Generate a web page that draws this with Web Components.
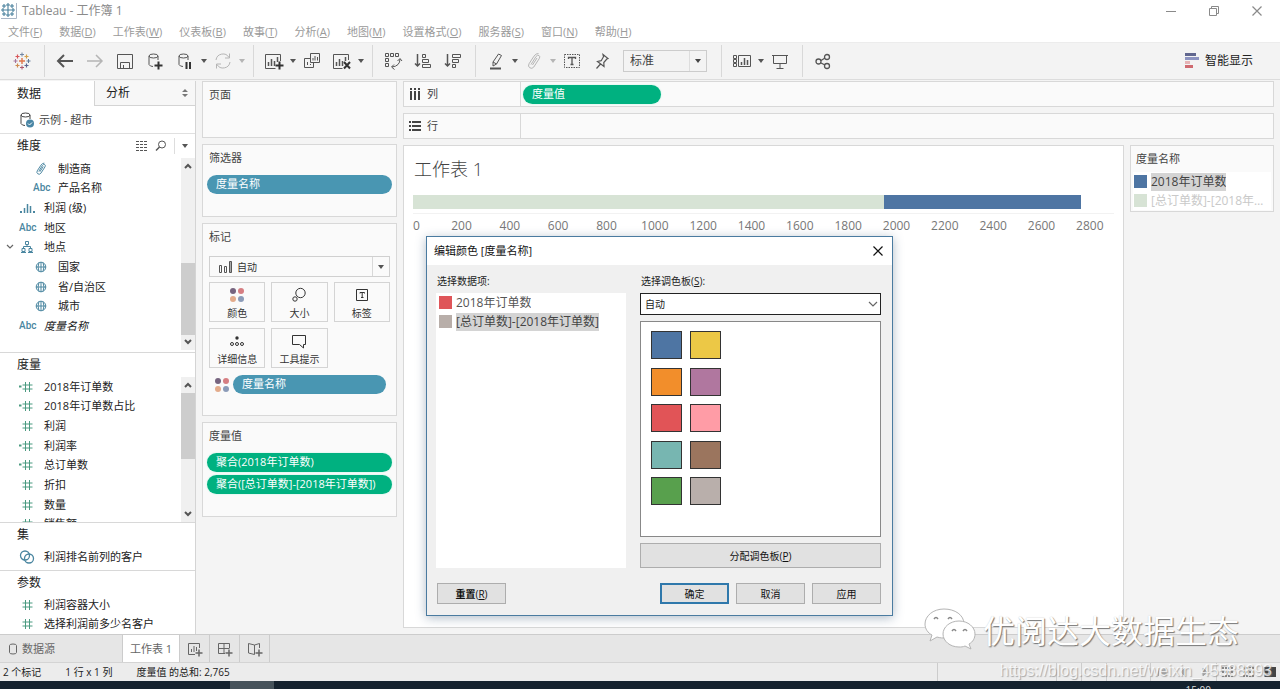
<!DOCTYPE html>
<html lang="zh-CN">
<head>
<meta charset="utf-8">
<title>Tableau - 工作簿 1</title>
<style>
html,body{margin:0;height:100%}
body{font:11px/16px "Open Sans","Noto Sans CJK SC",sans-serif;color:#333;background:#f4f4f4;overflow:hidden}
</style>
</head>
<body>
<workbook-app></workbook-app>
<script>
const grid4 = '<g stroke="none"><circle cx="4" cy="4" r="3" fill="#76647f"/><circle cx="12" cy="4" r="3" fill="#d67e82"/><circle cx="4" cy="12" r="3" fill="#e3ab8b"/><circle cx="12" cy="12" r="3" fill="#8b9bb8"/></g>';
const plus = (x, y, r = 3) => `<path stroke="#333" stroke-width="2" d="M${x - r} ${y}h${2 * r}M${x} ${y - r}v${2 * r}"/>`;
const cross = (x, y, r, c, w = 1) => `<path stroke="${c}" stroke-width="${w}" d="M${x - r} ${y}h${2 * r}M${x} ${y - r}v${2 * r}"/>`;
const tableau = cross(9, 9, 3, '#e0764a', 1.4) + cross(9, 2.5, 2, '#7187a5') + cross(9, 15.5, 2, '#b0566c') + cross(2.5, 9, 2, '#a5749b') + cross(15.5, 9, 2, '#5f7796') + cross(4.5, 4.5, 2, '#d8575a', 1.2) + cross(13.5, 4.5, 2, '#d3a04b', 1.2) + cross(4.5, 13.5, 2, '#cf8b4e', 1.2) + cross(13.5, 13.5, 2, '#5b6591', 1.2);
const tableauBlue = ['7 7 3', '7 2 2', '7 12 2', '2 7 2', '12 7 2', '3 3 2', '11 3 2', '3 11 2', '11 11 2'].map(s => cross(...s.split(' ').map(Number), '#467f9b', 1.1)).join('');
const clip = '<path d="M5 12.500 10 4.500q1.500-2 3-1t.3 3l-5.500 8.500q-1.800 2.300-4 .8t-.8-4l5-7.700q2-2.800 4.500-2.600M6.500 13l4.500-7"/>';
const hash = '<path d="M6.500 3v10M10.500 3v10M3.500 6h10M3.500 10h10"/>';
const cyl = '<path d="M2 4v8.500q1 2 4 2M11 8V4M2 4q0-2 4.500-2T11 4 6.500 6 2 4"/>';
/* name: [width, height, markup]; strokes take currentColor unless overridden */
const ICONS = {
  tableau: [18, 18, tableau],
  appicon: [16, 16, '<g>' + tableauBlue + '</g><path stroke="#a9b6c6" d="M15.500 0v15.500H0"/>'],
  back: [18, 18, '<path stroke-width="2" d="M17 9H2M8 3 2 9l6 6"/>'],
  fwd: [18, 18, '<path stroke-width="1.500" d="M1 9h15M10 3l6 6-6 6"/>'],
  save: [18, 18, '<path d="M1.500 2.500h15v14h-15zM4.500 16.500v-6h9v6M7.500 16v-3"/>'],
  dsadd: [16, 18, cyl + plus(11.5, 13.5, 4)],
  dspause: [16, 18, cyl + '<path stroke="#333" stroke-width="2" d="M9.500 10v7M13 10v7"/>'],
  refresh: [18, 18, '<path d="M2 8a7 7 0 0 1 13-2.500M16 10a7 7 0 0 1-13 2.500M15.500 1.500v4.500H11M2.500 16.500V12H7"/>'],
  newws: [20, 18, '<path d="M16.500 9V2.500h-15v14h10"/><path stroke-width="1.500" d="M4.500 10v4M7.500 7v7M10.500 9v5M13.500 5v5"/>' + plus(15.5, 13.5, 4)],
  dup: [18, 18, '<path d="M7.500 1.500h9v9h-9zM7 6.500H1.500v9h9V11M4.500 10v3M7.500 12v1"/><path d="M10 6v2.500M12 4v4.500M14.500 5v3.500"/>'],
  clear: [20, 18, '<path d="M16.500 8V2.500h-15v14h9"/><path stroke-width="1.500" d="M4.500 10v4M7.500 7v7M10.500 9v5M13.500 5v4"/><path stroke="#333" stroke-width="2" d="m12 10 6 6.500m0-6.500-6 6.500"/>'],
  swap: [20, 18, '<path d="M2.500 1.500h3v3h-3zM7.500 1.500h3v3h-3zM12.500 1.500h3v3h-3zM2.500 6.500h3v3h-3zM2.500 11.500h3v3h-3zM17 7q0 7-8 8M14.500 9 17 6.500 19 9M11 12.500 8.500 15l3 2.500"/>'],
  asc: [18, 18, '<path stroke-width="1.500" d="M3.500 2v12M1 11.500 3.500 14 6 11.500"/><path d="M8.500 2.500h3v3h-3zM8.500 7.500h6v3h-6zM8.500 12.500h8v3h-8z"/>'],
  desc: [18, 18, '<path stroke-width="1.500" d="M3.500 2v12M1 11.500 3.500 14 6 11.500"/><path d="M8.500 2.500h8v3h-8zM8.500 7.500h6v3h-6zM8.500 12.500h3v3h-3z"/>'],
  hilite: [16, 18, '<path d="m5 10 5.500-8 3 1.500-5 8.500L5 14zM5 10l3.500 2"/><path stroke-width="2" d="M2 16.500h11"/>'],
  clip: [16, 18, clip],
  label: [18, 18, '<path stroke-dasharray="1.500 1" d="M1.500 2.500h15v13h-15z"/><path stroke-width="1.300" d="M5.500 7V5.500h7V7M9 5.500v7M7.500 12.500h3"/>'],
  pin: [16, 18, '<path stroke-width="1.200" d="m9 2.500 5 4-1.200.5-3 3.500.2 4-6.500-5 3.700-.8 2.300-4zM6.500 12 2.500 16.500"/>'],
  fit: [20, 18, '<path d="M1.500 3.500h3v3h-3zM1.500 7.500h3v3h-3zM1.500 11.500h3v3h-3zM6.500 3.500h12v11h-12z"/><path stroke-width="1.500" d="M9.500 10v3M12.500 6v7M15.500 8v5"/>'],
  present: [18, 18, '<path d="M1 3.500h16M2.500 3.500v8h13v-8M9 12v4M5.500 16.500h7"/>'],
  share: [18, 18, '<g stroke-width="1.300"><circle cx="4.500" cy="9.500" r="2.500"/><circle cx="13" cy="5" r="2.500"/><circle cx="13" cy="14" r="2.500"/><path d="m7 8.500 4-2.500M7 11l4 2"/></g>'],
  showme: [14, 16, '<g stroke="none"><path fill="#61678f" d="M0 0h11v3H0z"/><path fill="#8c93c0" d="M0 4h14v3H0z"/><path fill="#e6b3b5" d="M0 8h5v3H0z"/><path fill="#cf6a70" d="M0 12h8v3H0z"/></g>'],
  caret: [6, 4, '<path fill="currentColor" stroke="none" d="M0 0h6L3 4z"/>'],
  updown: [6, 8, '<path fill="currentColor" stroke="none" d="M0 3h6L3 0zM0 5h6L3 8z"/>'],
  up: [8, 6, '<path stroke-width="2" d="M1 5l3-3 3 3"/>'],
  down: [8, 6, '<path stroke-width="2" d="M1 1l3 3 3-3"/>'],
  chev: [10, 6, '<path stroke-width="1.200" d="M1 1l4 4 4-4"/>'],
  twisty: [8, 6, '<path stroke-width="1.200" d="M1 1l3 3 3-3"/>'],
  source: [16, 18, cyl + '<circle cx="11" cy="12.500" r="4" fill="#4a86a5" stroke="none"/><path stroke="#fff" d="m9 12.500 1.500 1.500L13 11.500"/>'],
  list: [12, 12, '<path stroke-dasharray="3 1" d="M0 1.500h12M0 4.500h12M0 7.500h12M0 10.500h12"/>'],
  search: [12, 12, '<circle cx="7" cy="4.500" r="3.500"/><path stroke-width="1.500" d="M4.500 7 1 10.500"/>'],
  fieldclip: [16, 16, `<g transform="translate(2 1) scale(.75)" stroke-width="1.300">${clip}</g>`],
  bars: [16, 16, '<path stroke-width="1.500" d="M5.500 8v5M8.500 4v9M11.500 6v7"/><path stroke-width="2" d="M1 12h2M14 12h2"/>'],
  tree: [16, 16, '<path d="M6.500 2.500h3v3h-3zM3 12.500h3v-3H3zM10 12.500h3v-3h-3zM8 5.500v2M4.500 9.500v-2h7v2M2 13.500h5M9 13.500h5"/>'],
  globe: [16, 16, '<circle cx="8" cy="8" r="4.800"/><path d="M3 8h10M8 3v10M6 3.700q-2 4.300 0 8.600M10 3.700q2 4.300 0 8.600"/>'],
  hash: [16, 16, hash],
  calc: [16, 16, hash + '<path stroke-width="2" d="M0 7.500h2.500"/>'],
  sets: [16, 16, '<g stroke-width="1.300"><circle cx="6" cy="6.500" r="4.500"/><circle cx="10" cy="9.500" r="4.500"/></g>'],
  cols: [12, 14, '<path stroke-width="2" d="M2 4v9M6 4v9M10 4v9M2 1v2M6 1v2M10 1v2"/>'],
  rows: [12, 12, '<path stroke-width="2" d="M3 2h9M3 6h9M3 10h9M0 2h2M0 6h2M0 10h2"/>'],
  marktype: [16, 14, '<path d="M2.500 5.500h2v7h-2zM7.500 6.500h2v6h-2z"/><path fill="#aaa" d="M12.500 1.500h2v11h-2z"/>'],
  color: [16, 16, grid4],
  size: [16, 16, '<circle cx="9.500" cy="6" r="4.700"/><circle cx="4" cy="12" r="2.200" fill="#fafafa"/>'],
  text: [16, 16, '<path d="M2.500 2.500h11v11h-11zM6 6.500v-1h4.500v1M8.200 5.500v5M7 10.500h2.500"/>'],
  detail: [16, 16, '<circle cx="8" cy="5" r="1.700" fill="currentColor" stroke="none"/><circle cx="3" cy="11" r="1.500"/><circle cx="8" cy="11" r="1.500"/><circle cx="13" cy="11" r="1.500"/>'],
  tip: [16, 16, '<path d="M1.500 2.500h13v9h-2v3.500L8.500 11.500h-7z"/>'],
  cyl: [10, 12, '<path d="M1.500 2.500v7q0 1.500 3.500 1.500t3.500-1.500v-7q0-1.500-3.500-1.500T1.500 2.500"/>'],
  tabws: [16, 16, '<path d="M12.500 7V2.500h-11v11H8M4.500 8v3M7 5v6M9.500 6v4"/><path stroke-width="1.500" d="M8.500 12h7M12 8.500v7"/>'],
  tabdash: [16, 16, '<path d="M12.500 7V2.500h-11v10H8M1.500 7.500h11M7 2.500v10"/><path stroke-width="1.500" d="M8.500 12h7M12 8.500v7"/>'],
  tabstory: [16, 16, '<path d="M7.500 4v9.500L1.500 12V2.500l6 1.500 5-1.500V7"/><path stroke-width="1.500" d="M8.500 12h7M12 8.500v7"/>'],
  min: [12, 12, '<path d="M1 6.500h10"/>'],
  max: [12, 12, '<path d="M1.500 3.500h7v7h-7zM3.500 3V1.500h7v7H9"/>'],
  close: [12, 12, '<path stroke-width="1.200" d="m1.500 1.500 9 9m0-9-9 9"/>'],
  first: [10, 10, '<path d="M1.500 1v8"/><path fill="currentColor" d="M9 1v8L4 5z"/>'],
  prev: [10, 10, '<path fill="currentColor" d="M7 1v8L3 5z"/>'],
  next: [10, 10, '<path fill="currentColor" d="M3 1v8l4-4z"/>'],
  tiles: [12, 10, '<path stroke-dasharray="2 1" stroke-width="2" d="M0 1h12M0 5h12M0 9h12"/>'],
  block: [12, 10, '<path fill="currentColor" d="M1 0h11v10H1z"/><path stroke="#eee" d="M1 3h4v4H1"/>'],
  wechat: [52, 42, '<g fill="#fff" stroke="#b4b4b4" stroke-width="1"><path d="M20 1C9 1 1 8 1 16c0 5 3 9 7 11l-2 6 7-4c3 1 6 1 9 1 9 0 18-5 18-14S31 1 20 1z"/><path d="M35 13c-9 0-16 6-16 13s7 13 16 13c2 0 4 0 6-1l6 3-2-5c4-2 6-6 6-10 0-7-7-13-16-13z"/></g><path stroke="#888" stroke-width="1.500" d="M10 11q2-3 4 0M24 11q2-3 4 0M28 23q2-3 4 0M39 23q2-3 4 0"/>']
};

function define(name, html) {
  const t = document.createElement('template');
  t.innerHTML = html;
  customElements.define(name, class extends HTMLElement {
    constructor() {
      super();
      this.attachShadow({ mode: 'open' }).append(t.content.cloneNode(true));
    }
  });
}

customElements.define('ui-icon', class extends HTMLElement {
  connectedCallback() {
    if (this.shadowRoot) return;
    const [w, h, body] = ICONS[this.getAttribute('name')];
    this.attachShadow({ mode: 'open' }).innerHTML =
      `<style>:host{display:inline-block;flex:none;line-height:0}svg{display:block}</style>
       <svg width="${w}" height="${h}" viewBox="0 0 ${w} ${h}" fill="none" stroke="currentColor" aria-hidden="true">${body}</svg>`;
  }
});

/* toolbar button: icon, optional drop-down caret */
customElements.define('tool-button', class extends HTMLElement {
  connectedCallback() {
    if (this.shadowRoot) return;
    this.attachShadow({ mode: 'open' }).innerHTML =
      `<style>:host{display:flex;align-items:center;color:#555}:host([dim]){color:#b5b5b5}
       button{all:unset;display:flex;align-items:center;justify-content:center;width:30px;height:30px}
       button.c{width:8px}</style>
       <button aria-label="${this.getAttribute('label')}"><ui-icon name="${this.getAttribute('icon')}"></ui-icon></button>
       ${this.hasAttribute('menu') ? '<button class="c" aria-label="更多"><ui-icon name="caret"></ui-icon></button>' : ''}`;
  }
});

define('window-bar', `<style>
:host{display:flex;align-items:center;height:22px;background:#fff;color:#8a8a8a;padding:0 17px 0 1px;gap:5px}
h1{font:inherit;font-size:12px;margin:0;flex:1}
button{all:unset;width:38px;height:20px;display:flex;align-items:center;justify-content:flex-end}
</style>
<ui-icon name="appicon"></ui-icon><h1>Tableau - 工作簿 1</h1>
<button aria-label="最小化"><ui-icon name="min"></ui-icon></button><button aria-label="还原"><ui-icon name="max"></ui-icon></button><button aria-label="关闭"><ui-icon name="close"></ui-icon></button>`);

define('menu-bar', `<style>
:host{display:block;background:#fff;color:#9a9a9a}
nav{display:flex;align-items:center;height:20px;gap:17px;padding-left:8px}
button{all:unset;white-space:nowrap}
</style><nav>
<button>文件(<u>F</u>)</button><button>数据(<u>D</u>)</button><button>工作表(<u>W</u>)</button><button>仪表板(<u>B</u>)</button><button>故事(<u>T</u>)</button><button>分析(<u>A</u>)</button><button>地图(<u>M</u>)</button><button>设置格式(<u>O</u>)</button><button>服务器(<u>S</u>)</button><button>窗口(<u>N</u>)</button><button>帮助(<u>H</u>)</button></nav>`);

define('tool-bar', `<style>
:host{display:flex;align-items:center;height:38px;background:#f3f3f3;border-bottom:1px solid #dcdcdc;border-top:1px solid #ececec;box-sizing:border-box}
.g{display:flex;align-items:center;height:32px;border-right:1px solid #d8d8d8;padding:0 7px 0 5px}
.g.logo{padding:0 7px}.g.last{border:0}
.fit{display:flex;position:relative;align-items:center;margin:0 7px 0 6px;width:84px;height:22px;box-sizing:border-box;border:1px solid #ccc;color:#444}
select{appearance:none;border:0;background:none;font:inherit;font-size:12px;color:inherit;width:100%;height:20px;padding:0 6px;outline:0}
.fit ui-icon{position:absolute;right:5px;pointer-events:none}
.fit::after{content:"";position:absolute;right:16px;width:1px;height:20px;background:#ddd}
.show{all:unset;display:flex;align-items:center;gap:6px;margin-left:auto;padding-right:27px;font-size:12px;color:#222}
</style>
<div class="g logo"><tool-button icon="tableau" label="起始页"></tool-button></div>
<div class="g"><tool-button icon="back" label="撤消"></tool-button><tool-button dim icon="fwd" label="重做"></tool-button><tool-button icon="save" label="保存"></tool-button><tool-button icon="dsadd" label="新建数据源"></tool-button><tool-button menu icon="dspause" label="暂停自动更新"></tool-button><tool-button dim menu icon="refresh" label="运行更新"></tool-button></div>
<div class="g"><tool-button menu icon="newws" label="新建工作表"></tool-button><tool-button icon="dup" label="复制"></tool-button><tool-button menu icon="clear" label="清除工作表"></tool-button></div>
<div class="g"><tool-button icon="swap" label="交换行和列"></tool-button><tool-button icon="asc" label="升序排序"></tool-button><tool-button icon="desc" label="降序排序"></tool-button></div>
<div class="g"><tool-button menu icon="hilite" label="突出显示"></tool-button><tool-button dim menu icon="clip" label="组成员"></tool-button><tool-button icon="label" label="显示标记标签"></tool-button><tool-button icon="pin" label="固定轴"></tool-button>
<div class="fit"><select aria-label="适合"><option>标准</option></select><ui-icon name="caret"></ui-icon></div></div>
<div class="g"><tool-button menu icon="fit" label="显示/隐藏卡"></tool-button><tool-button icon="present" label="演示模式"></tool-button></div>
<div class="g last"><tool-button icon="share" label="共享"></tool-button></div>
<button class="show"><ui-icon name="showme"></ui-icon>智能显示</button>`);

define('scroll-rail', `<style>
:host{display:flex;flex-direction:column;width:14px;background:#f0f0f0;color:#555}
button{all:unset;height:16px;display:flex;align-items:center;justify-content:center}
.rail{flex:1;display:flex;flex-direction:column}
.thumb{background:#cdcdcd;height:var(--thumb);margin-top:var(--start,0)}
</style><button aria-label="向上滚动"><ui-icon name="up"></ui-icon></button><div class="rail"><div class="thumb"></div></div><button aria-label="向下滚动"><ui-icon name="down"></ui-icon></button>`);

customElements.define('field-row', class extends HTMLElement {
  connectedCallback() {
    if (this.shadowRoot) return;
    const i = this.getAttribute('icon');
    this.attachShadow({ mode: 'open' }).innerHTML =
      `<style>:host{display:flex;align-items:center;min-height:0;color:#222;white-space:nowrap}
       .t{width:19px;display:flex;justify-content:center;color:#666}
       .i{width:16px;margin-right:9px;display:flex;color:#4a9a80}
       .i.d{color:#4a86a0}.i b{font:500 10px/16px Roboto,sans-serif;color:#4a86a0}
       :host([indent]) .t{width:33px}</style>
       <span class="t">${this.hasAttribute('open') ? '<ui-icon name="twisty"></ui-icon>' : ''}</span>
       <span class="i ${/hash|calc/.test(i) ? '' : 'd'}">${i === 'abc' ? '<b>Abc</b>' : `<ui-icon name="${i}"></ui-icon>`}</span><slot></slot>`;
  }
});

define('data-pane', `<style>
:host{display:flex;flex-direction:column;box-sizing:border-box;width:196px;flex:none;background:#fff;border-right:1px solid #d4d4d4;min-height:0;overflow:hidden}
.tabs{display:flex;height:25px;flex:none}
.tabs button{all:unset;box-sizing:border-box;padding-left:17px;font-size:12px;line-height:26px;color:#222;width:94px}
.tabs button+button{flex:1;display:flex;align-items:center;justify-content:space-between;padding:0 7px 0 11px;background:#f7f7f7;border-left:1px solid #d4d4d4;border-bottom:1px solid #d4d4d4}
.tabs ui-icon{color:#777}
.src{display:flex;align-items:center;gap:4px;padding-left:19px;height:27px;flex:none;border-bottom:1px solid #e0e0e0;color:#444}
section{border-bottom:1px solid #d8d8d8;display:flex;flex-direction:column;min-height:0;flex:none;overflow:hidden;box-sizing:border-box}
h2{font:12px/24px "Open Sans","Noto Sans CJK SC",sans-serif;color:#222;margin:0;padding-left:17px;display:flex;align-items:center;flex:none}
h2 .a{margin-left:auto;display:flex;align-items:center;gap:7px;color:#555;padding-right:7px}
.a i{width:1px;height:16px;background:#ddd}
.body{display:flex;flex:1;min-height:0}
.list{flex:1;display:grid;grid-auto-rows:1fr}
.dims{height:219px}.dims .list{height:177px;padding-top:1px}.dims .body{flex:none;height:192px}
.meas{height:170px}.meas .list{height:157px}
.sets{height:48px}.sets .list{flex:none;height:19px}.two{height:39px;flex:none}
.pars{flex:1;border:0}
</style>
<div class="tabs"><button>数据</button><button>分析<ui-icon name="updown"></ui-icon></button></div>
<div class="src"><ui-icon name="source"></ui-icon>示例 - 超市</div>
<section class="dims"><h2>维度<span class="a"><ui-icon name="list"></ui-icon><ui-icon name="search"></ui-icon><i></i><ui-icon name="caret"></ui-icon></span></h2>
<div class="body"><div class="list">
<field-row indent icon="fieldclip">制造商</field-row><field-row indent icon="abc">产品名称</field-row><field-row icon="bars">利润 (级)</field-row><field-row icon="abc">地区</field-row><field-row open icon="tree">地点</field-row><field-row indent icon="globe">国家</field-row><field-row indent icon="globe">省/自治区</field-row><field-row indent icon="globe">城市</field-row><field-row icon="abc"><em>度量名称</em></field-row>
</div><scroll-rail style="--thumb:72px;--start:89px"></scroll-rail></div></section>
<section class="meas"><h2>度量</h2><div class="body"><div class="list">
<field-row icon="calc">2018年订单数</field-row><field-row icon="calc">2018年订单数占比</field-row><field-row icon="hash">利润</field-row><field-row icon="calc">利润率</field-row><field-row icon="calc">总订单数</field-row><field-row icon="hash">折扣</field-row><field-row icon="hash">数量</field-row><field-row icon="hash">销售额</field-row>
</div><scroll-rail style="--thumb:66px"></scroll-rail></div></section>
<section class="sets"><h2>集</h2><div class="list"><field-row icon="sets">利润排名前列的客户</field-row></div></section>
<section class="pars"><h2>参数</h2><div class="list two"><field-row icon="hash">利润容器大小</field-row><field-row icon="hash">选择利润前多少名客户</field-row></div></section>`);

define('field-pill', `<style>
:host{display:block;box-sizing:border-box;height:19px;line-height:18px;border-radius:10px;padding:0 9px;color:#fff;background:#4996b2;white-space:nowrap}
:host([measure]){background:#00b180;box-shadow:0 0 2px #b8f3e0}
</style><slot></slot>`);

define('shelf-card', `<style>
:host{display:block;box-sizing:border-box;border:1px solid #d8d8d8;background:#fafafa;padding:4px}
h3{font:inherit;line-height:18px;margin:0 0 0 2px;color:#444}
</style><h3><slot name="title"></slot></h3><slot></slot>`);

define('mark-button', `<style>
:host{display:block}
button{all:unset;box-sizing:border-box;width:100%;height:40px;border:1px solid #d4d4d4;background:#fafafa;display:flex;flex-direction:column;align-items:center;justify-content:space-between;padding:4px 0 0;font-size:10px;line-height:16px;color:#333;white-space:nowrap}
</style><button><slot name="icon"></slot><slot></slot></button>`);

define('card-column', `<style>
:host{display:flex;flex-direction:column;gap:6px;width:195px;flex:none}
.pages{height:57px}.filters{height:73px}.marks{height:193px}.values{height:95px}
.filters field-pill{margin-top:8px}
.type{display:flex;align-items:center;height:21px;box-sizing:border-box;border:1px solid #d0d0d0;margin:10px 2px 5px;padding-left:7px;position:relative;color:#555}
select{appearance:none;border:0;background:none;flex:1;height:19px;font:inherit;font-size:10px;color:#333;outline:0;padding:0 4px}
.type .arrow{width:16px;height:19px;border-left:1px solid #d8d8d8;display:flex;align-items:center;justify-content:center;pointer-events:none}
.grid{display:grid;grid-template-columns:repeat(3,1fr);gap:6px;margin:0 2px;color:#555}
.enc{display:flex;align-items:center;gap:3px;margin:7px 6px 0 7px}.enc field-pill{flex:1}
.values field-pill{margin-top:8px}.values field-pill+field-pill{margin-top:3px}
</style>
<shelf-card class="pages"><span slot="title">页面</span></shelf-card>
<shelf-card class="filters"><span slot="title">筛选器</span><field-pill>度量名称</field-pill></shelf-card>
<shelf-card class="marks"><span slot="title">标记</span>
<div class="type"><ui-icon name="marktype"></ui-icon><select aria-label="标记类型"><option>自动</option></select><span class="arrow"><ui-icon name="caret"></ui-icon></span></div>
<div class="grid">
<mark-button><ui-icon slot="icon" name="color"></ui-icon>颜色</mark-button><mark-button><ui-icon slot="icon" name="size"></ui-icon>大小</mark-button><mark-button><ui-icon slot="icon" name="text"></ui-icon>标签</mark-button><mark-button><ui-icon slot="icon" name="detail"></ui-icon>详细信息</mark-button><mark-button><ui-icon slot="icon" name="tip"></ui-icon>工具提示</mark-button></div>
<div class="enc"><ui-icon name="color"></ui-icon><field-pill>度量名称</field-pill></div></shelf-card>
<shelf-card class="values"><span slot="title">度量值</span><field-pill measure>聚合(2018年订单数)</field-pill><field-pill measure>聚合([总订单数]-[2018年订单数])</field-pill></shelf-card>`);

define('axis-shelf', `<style>
:host{display:flex;align-items:center;box-sizing:border-box;height:26px;border:1px solid #d8d8d8;background:#fafafa}
.l{width:117px;box-sizing:border-box;height:100%;border-right:1px solid #d8d8d8;display:flex;align-items:center;gap:6px;padding-left:5px;color:#444}
.z{padding-left:2px}::slotted(field-pill){width:138px}
</style><div class="l"><slot name="icon"></slot><slot name="label"></slot></div><div class="z"><slot></slot></div>`);

define('bar-chart', `<style>
:host{display:block;padding:0 9px}
.bars{display:flex;height:22px;align-items:center;border-bottom:1px solid #f2f2f2}
.bars i{height:14px}.g{width:67.2%;background:#d7e3d5}.b{width:28.1%;background:#4e75a3}
.axis{display:grid;grid-template-columns:repeat(15,1fr);margin-left:-24px;padding-top:3px;font-size:12px;line-height:18px;color:#777;text-align:center}
.axis span:first-child{text-align:left;padding-left:24px}
</style><div class="bars"><i class="g"></i><i class="b"></i></div>
<div class="axis"><span>0</span><span>200</span><span>400</span><span>600</span><span>800</span><span>1000</span><span>1200</span><span>1400</span><span>1600</span><span>1800</span><span>2000</span><span>2200</span><span>2400</span><span>2600</span><span>2800</span></div>`);

define('legend-item', `<style>
:host{display:flex;align-items:center;gap:4px;height:19px;font-size:12px;line-height:18px;color:#555;min-width:0}
i{width:13px;height:13px;background:var(--c);flex:none}
span{white-space:nowrap;overflow:hidden;text-overflow:ellipsis}
:host([on]) span{background:#d4d4d4;color:#444}:host([faded]) span{color:#c9c9c9}
</style><i></i><span><slot></slot></span>`);

define('sheet-view', `<style>
:host{display:flex;flex-direction:column;flex:1;gap:6px;min-width:0}
.lower{display:flex;gap:6px;flex:1;min-height:0;padding-bottom:6px}
.canvas{flex:1;background:#fff;border:1px solid #d8d8d8;min-width:0}
h2{font:300 18px/28px "Open Sans","Noto Sans CJK SC",sans-serif;color:#444;margin:9px 0 8px 10px}
.legend{width:144px;height:67px;flex:none;padding:4px 2px}
.legend span{padding-left:1px}
.items{background:#fff;margin-top:4px;padding-left:1px}
</style>
<axis-shelf><ui-icon slot="icon" name="cols"></ui-icon><span slot="label">列</span><field-pill measure>度量值</field-pill></axis-shelf>
<axis-shelf><ui-icon slot="icon" name="rows"></ui-icon><span slot="label">行</span></axis-shelf>
<div class="lower"><div class="canvas"><h2>工作表 1</h2><bar-chart></bar-chart></div>
<shelf-card class="legend"><span slot="title">度量名称</span><div class="items"><legend-item on style="--c:#4e75a3">2018年订单数</legend-item><legend-item faded style="--c:#d7e3d5">[总订单数]-[2018年订...</legend-item></div></shelf-card></div>`);

define('color-dialog', `<style>
:host{display:flex;flex-direction:column;box-sizing:border-box;width:467px;height:380px;border:1px solid #4a7ba0;background:#f0f0f0;box-shadow:0 2px 10px rgba(60,90,120,.4);color:#222;font-size:10px}
header{display:flex;align-items:center;justify-content:space-between;background:#fff;height:28px;padding:0 8px 0 7px;font-size:11px;color:#111}
button{font:inherit;color:#111;background:#e1e1e1;border:1px solid #adadad;padding:0;margin:0;border-radius:0}
header button{background:none;border:0;line-height:0}
.main{display:grid;grid-template-columns:190px 241px;justify-content:space-between;padding:8px 11px 0 9px}
.col{display:flex;flex-direction:column}
label,.cap{line-height:16px;margin-bottom:4px;padding-left:1px}
.items{background:#fff;height:275px;box-sizing:border-box;padding:0 3px}
select{font:inherit;height:22px;width:100%;border:1px solid #222;background:#fff;appearance:none;padding:0 4px;border-radius:0;color:#222}
.sel{position:relative;margin-bottom:6px;height:22px}.sel ui-icon{position:absolute;right:3px;top:8px;color:#666;pointer-events:none}
.pal{box-sizing:border-box;height:216px;border:1px solid #888;background:#fff;padding:9px 10px 31px;display:grid;grid-template-columns:31px 31px;grid-auto-rows:28px;column-gap:8px;align-content:space-between;margin-bottom:6px}
.pal button{border:1px solid #333;background:var(--c)}
.assign{height:25px}
footer{display:flex;gap:7px;margin-top:15px;padding:0 11px 0 10px}
footer button{width:69px;height:21px}
.reset{margin-right:auto}.reset b{font-weight:700}.ok{border:2px solid #2f78ab}
</style>
<header>编辑颜色 [度量名称]<button aria-label="关闭"><ui-icon name="close"></ui-icon></button></header>
<div class="main"><div class="col"><span class="cap">选择数据项:</span><div class="items"><legend-item style="--c:#df5559">2018年订单数</legend-item><legend-item on style="--c:#b8aea9">[总订单数]-[2018年订单数]</legend-item></div></div>
<div class="col"><label for="p">选择调色板(<u>S</u>):</label><div class="sel"><select id="p"><option>自动</option></select><ui-icon name="chev"></ui-icon></div>
<div class="pal"><button aria-label="蓝" style="--c:#4e75a3"></button><button aria-label="黄" style="--c:#ecc846"></button><button aria-label="橙" style="--c:#f28e2b"></button><button aria-label="紫" style="--c:#b0779f"></button><button aria-label="红" style="--c:#e15457"></button><button aria-label="粉" style="--c:#ff9ca6"></button><button aria-label="青" style="--c:#77b6b1"></button><button aria-label="棕" style="--c:#9b755e"></button><button aria-label="绿" style="--c:#58a04d"></button><button aria-label="灰" style="--c:#b9afab"></button></div>
<button class="assign">分配调色板(<u>P</u>)</button></div></div>
<footer><button class="reset"><b>重置</b>(<u>R</u>)</button><button class="ok">确定</button><button>取消</button><button>应用</button></footer>`);

define('sheet-tabs', `<style>
:host{display:flex;height:28px;flex:none;background:#e6e6e6;border-top:1px solid #ccc;box-sizing:border-box;color:#666}
button{all:unset;box-sizing:border-box;height:100%;width:30px;border-right:1px solid #ccc;display:flex;align-items:center;justify-content:center;white-space:nowrap}
.src{width:123px;justify-content:flex-start;gap:4px;padding-left:8px}.on{width:57px;background:#fff}
</style><button class="src"><ui-icon name="cyl"></ui-icon>数据源</button><button class="on">工作表 1</button><button aria-label="新建工作表"><ui-icon name="tabws"></ui-icon></button><button aria-label="新建仪表板"><ui-icon name="tabdash"></ui-icon></button><button aria-label="新建故事"><ui-icon name="tabstory"></ui-icon></button>`);

define('status-bar', `<style>
:host{display:flex;align-items:center;height:19px;flex:none;background:#ececec;border-top:1px solid #d4d4d4;box-sizing:border-box;font-size:10px;color:#222;padding-left:3px;gap:24px;white-space:nowrap}
.r{margin-left:auto;display:flex;height:100%;color:#aaa}
.r span{border-left:1px solid #ccc;display:flex;align-items:center;justify-content:space-around;box-sizing:border-box}
.a{width:119px}.b{width:25px}.c{width:44px}.d{width:66px}.e{width:64px;color:#888}.e :last-child{color:#444}
</style><span>2 个标记</span><span>1 行 x 1 列</span><span>度量值 的总和: 2,765</span>
<div class="r"><span class="a"></span><span class="b"></span><span class="b"></span><span class="c"></span><span class="d"><ui-icon name="first"></ui-icon><ui-icon name="prev"></ui-icon><ui-icon name="next"></ui-icon></span><span class="e"><ui-icon name="tiles"></ui-icon><ui-icon name="tiles"></ui-icon><ui-icon name="block"></ui-icon></span></div>`);

define('task-bar', `<style>
:host{display:flex;height:8px;flex:none;overflow:hidden;background:#15222e;justify-content:space-between;color:#ddd;font-size:10px}
i{width:44px;margin-left:230px;background:#46525a}
time{padding:2px 69px 0 0;line-height:14px}
</style><i></i><time>15:00</time>`);

define('water-mark', `<style>
:host{display:block;pointer-events:none;color:#fff}
.n{display:flex;align-items:center;gap:7px;font:32px/42px "Noto Sans CJK SC",sans-serif;white-space:nowrap;text-shadow:1px 1px 1px #777,0 0 1px #ccc}
.u{font:16px/20px "Liberation Sans",sans-serif;color:rgba(255,255,255,.75);text-shadow:1px 1px 1px rgba(120,120,120,.6);text-align:right;margin-right:-33px;margin-top:11px}
</style><div class="n"><ui-icon name="wechat"></ui-icon>优阅达大数据生态</div><div class="u">https://blog.csdn.net/weixin_45588693</div>`);

define('workbook-app', `<style>
:host{display:flex;flex-direction:column;height:100vh;position:relative;overflow:hidden}
.work{display:flex;flex:1;min-height:0;gap:6px;padding:1px 6px 0 0;background:#f4f4f4}
color-dialog{position:absolute;left:426px;top:236px}
water-mark{position:absolute;right:41px;bottom:8px}
</style>
<window-bar></window-bar><menu-bar></menu-bar><tool-bar></tool-bar>
<div class="work"><data-pane></data-pane><card-column></card-column><sheet-view></sheet-view></div>
<sheet-tabs></sheet-tabs><status-bar></status-bar><task-bar></task-bar>
<color-dialog role="dialog" aria-label="编辑颜色"></color-dialog><water-mark></water-mark>`);
</script>
</body>
</html>
